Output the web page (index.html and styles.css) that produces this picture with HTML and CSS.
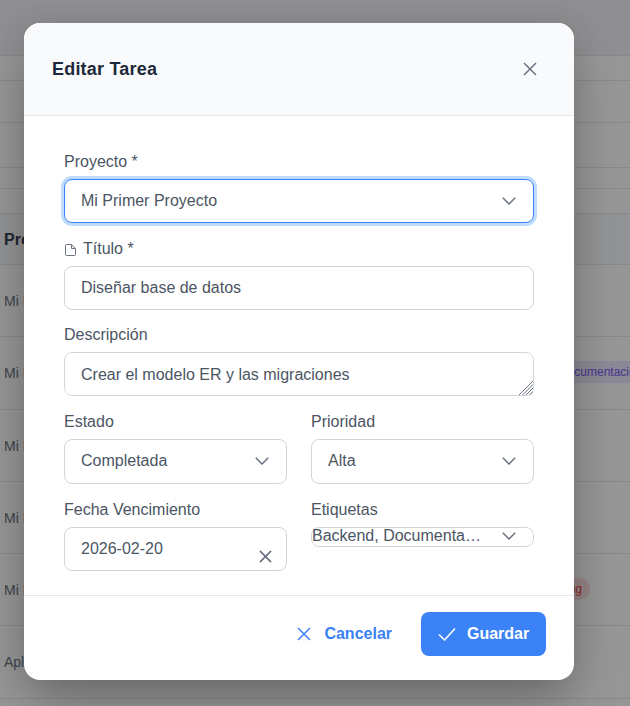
FILE: index.html
```html
<!DOCTYPE html>
<html lang="es">

<head>
    <meta charset="UTF-8">
    <meta name="viewport" content="width=device-width, initial-scale=1.0">
    <title>Editar Tarea</title>
    <link rel="stylesheet" href="styles.css">
</head>

<body>
    <!-- tabla de fondo -->
    <div class="page">
        <div class="line h55"></div>
        <div class="line h25"></div>
        <div class="line h42"></div>
        <div class="line h45"></div>
        <div class="line h21"></div>
        <div class="line h25"></div>
        <div class="line head-row">Proyecto</div>
        <div class="line row">Mi Primer</div>
        <div class="line row">Mi Primer<span class="chip chip_doc">Documentación</span></div>
        <div class="line row">Mi Primer</div>
        <div class="line row">Mi Primer</div>
        <div class="line row">Mi Primer<span class="chip chip_bug">Bug</span></div>
        <div class="line row">Aplicación</div>
    </div>

    <div class="overlay">
        <div class="modal">
            <div class="modal_head">
                <h2>Editar Tarea</h2>
                <svg class="icon_close" viewBox="0 0 14 14"><path d="M1 1l12 12M13 1L1 13" /></svg>
            </div>

            <div class="modal_body">
                <div class="field">
                    <label>Proyecto *</label>
                    <div class="box focus">
                        <span>Mi Primer Proyecto</span>
                        <svg class="chevron" viewBox="0 0 14 8"><path d="M.8.8L7 7 13.2.8" /></svg>
                    </div>
                </div>
                <div class="field">
                    <label class="with_icon">
                        <svg class="icon_doc" viewBox="0 0 11 12"><path d="M1.500.5h5L10.500 4.500v6a1 1 0 0 1-1 1h-8a1 1 0 0 1-1-1v-9a1 1 0 0 1 1-1zM6.500.5v4h4" /></svg>
                        Título *
                    </label>
                    <div class="box"><span>Diseñar base de datos</span></div>
                </div>
                <div class="field">
                    <label>Descripción</label>
                    <div class="area_wrap">
                        <textarea class="box area">Crear el modelo ER y las migraciones</textarea>
                        <svg class="resizer" viewBox="0 0 15 15"><path d="M1 15L15 1M4.500 15L15 4.500M8 15l7-7M11.500 15l3.500-3.500" /></svg>
                    </div>
                </div>
                <div class="grid">
                    <div class="field">
                        <label>Estado</label>
                        <div class="box tall">
                            <span>Completada</span>
                            <svg class="chevron" viewBox="0 0 14 8"><path d="M.8.8L7 7 13.2.8" /></svg>
                        </div>
                    </div>
                    <div class="field">
                        <label>Prioridad</label>
                        <div class="box tall">
                            <span>Alta</span>
                            <svg class="chevron" viewBox="0 0 14 8"><path d="M.8.8L7 7 13.2.8" /></svg>
                        </div>
                    </div>
                    <div class="field last">
                        <label>Fecha Vencimiento</label>
                        <div class="box date">
                            <span>2026-02-20</span>
                            <svg class="icon_clear" viewBox="0 0 14 14"><path d="M1 1l12 12M13 1L1 13" /></svg>
                        </div>
                    </div>
                    <div class="field last">
                        <label>Etiquetas</label>
                        <div class="box multi">
                            <span>Backend, Documenta…</span>
                            <svg class="chevron" viewBox="0 0 14 8"><path d="M.8.8L7 7 13.2.8" /></svg>
                        </div>
                    </div>
                </div>
            </div>

            <div class="modal_foot">
                <a href="javascript:;" class="btn btn_cancel">
                    <svg viewBox="0 0 14 14"><path d="M1 1l12 12M13 1L1 13" /></svg>
                    Cancelar
                </a>
                <a href="javascript:;" class="btn btn_save">
                    <svg viewBox="0 0 18 14"><path d="M1 7.500L6.500 13 17 1.500" /></svg>
                    Guardar
                </a>
            </div>
        </div>
    </div>
</body>

</html>
```

FILE: styles.css
```css
* {
    margin: 0;
    padding: 0;
    box-sizing: border-box;
}

html,
body {
    height: 706px;
    overflow: hidden;
}

body {
    font-family: "Liberation Sans", Arial, sans-serif;
    font-size: 16px;
    color: #4b5563;
    background: #fff;
    position: relative;
}

a {
    text-decoration: none;
}

svg {
    flex: none;
    fill: none;
    stroke: currentColor;
}

/* fondo */
.line {
    border-bottom: 1px solid #e5e7eb;
    white-space: nowrap;
    overflow: hidden;
}

.h55 { height: 56px; background: #f3f4f6; }
.h25 { height: 25px; }
.h42 { height: 42px; }
.h45 { height: 45px; }
.h21 { height: 21px; }

.head-row {
    height: 51px;
    line-height: 52px;
    padding-left: 4px;
    font-weight: bold;
    color: #374151;
    background: #f9fafb;
}

.row {
    height: 72.300px;
    line-height: 72px;
    padding-left: 4px;
    font-size: 14px;
    color: #6b7280;
    position: relative;
}

.chip {
    position: absolute;
    top: 24px;
    height: 22px;
    line-height: 22px;
    font-size: 12px;
    border-radius: 11px;
    padding: 0 8px;
}

.chip_doc {
    left: 551px;
    color: #7c5cf0;
    background: #ede9fe;
}

.chip_bug {
    left: 550px;
    width: 40px;
    text-align: right;
    color: #ef4444;
    background: #fee2e2;
}

/* modal */
.overlay {
    position: absolute;
    left: 0;
    top: 0;
    width: 100%;
    height: 100%;
    padding: 23px 0 0 24px;
    background: rgba(0, 0, 0, 0.41);
}

.modal {
    width: 550px;
    height: 657px;
    background: #fff;
    border-radius: 16px;
    overflow: hidden;
    display: flex;
    flex-direction: column;
    box-shadow: 0 25px 50px -6px rgba(0, 0, 0, 0.28), 0 0 30px rgba(0, 0, 0, 0.08);
}

.modal_head {
    height: 93px;
    flex: none;
    padding: 0 37px 0 28px;
    display: flex;
    align-items: center;
    justify-content: space-between;
    background: #f8fafc;
    border-bottom: 1px solid #e5e7eb;
}

.modal_head h2 {
    font-size: 18px;
    font-weight: bold;
    letter-spacing: 0.2px;
    color: #1e293b;
}

.icon_close {
    width: 14px;
    height: 14px;
    stroke-width: 1.500;
    color: #6b7280;
}

.modal_body {
    flex: 1;
    padding: 36.200px 40px 0;
}

.field {
    margin-bottom: 15.600px;
}

.field.last {
    margin-bottom: 0;
}

label {
    display: block;
    height: 19px;
    line-height: 19px;
    margin-bottom: 8px;
}

.with_icon {
    display: flex;
    align-items: center;
    gap: 7px;
}

.icon_doc {
    width: 11px;
    height: 12px;
    margin: 4px 0 0 1px;
    stroke-width: 1;
    color: #6b7280;
}

.box {
    display: flex;
    align-items: center;
    justify-content: space-between;
    width: 100%;
    height: 44px;
    padding: 0 17px 0 16px;
    background: #fff;
    border: 1px solid #d1d5db;
    border-radius: 8px;
    font: inherit;
    color: inherit;
}

.focus {
    border: 1.500px solid #3b82f6;
    box-shadow: 0 0 0 3px #bfdbfe;
}

.tall {
    height: 45px;
}

.area_wrap {
    position: relative;
}

.area {
    display: block;
    line-height: 19px;
    padding: 12px 16px;
    outline: none;
    resize: none;
}

.resizer {
    position: absolute;
    right: 1px;
    bottom: 1px;
    width: 15px;
    height: 15px;
    stroke-width: 1;
    color: #6b7280;
}

.multi {
    height: 20px;
    padding: 0 17px 1px 0;
}

.chevron {
    width: 14px;
    height: 8px;
    stroke-width: 1.500;
    color: #6b7280;
}

.icon_clear {
    width: 13px;
    height: 13px;
    margin: 16px -3px 0 0;
    stroke-width: 1.800;
    color: #6b7280;
}

.grid {
    display: grid;
    grid-template-columns: 1fr 1fr;
    column-gap: 24px;
}

.modal_foot {
    height: 85px;
    flex: none;
    padding: 16px 28px 0 0;
    display: flex;
    justify-content: flex-end;
    gap: 29px;
    border-top: 1px solid #e5e7eb;
}

.btn {
    height: 44px;
    display: flex;
    align-items: center;
    font-weight: bold;
    border-radius: 8px;
}

.btn_cancel {
    gap: 13px;
    color: #3b82f6;
}

.btn_cancel svg {
    width: 14px;
    height: 14px;
    stroke-width: 1.500;
}

.btn_save {
    width: 125px;
    padding-left: 17px;
    gap: 11px;
    color: #fff;
    background: #3b82f6;
}

.btn_save svg {
    width: 18px;
    height: 14px;
    stroke-width: 1.500;
}
```
